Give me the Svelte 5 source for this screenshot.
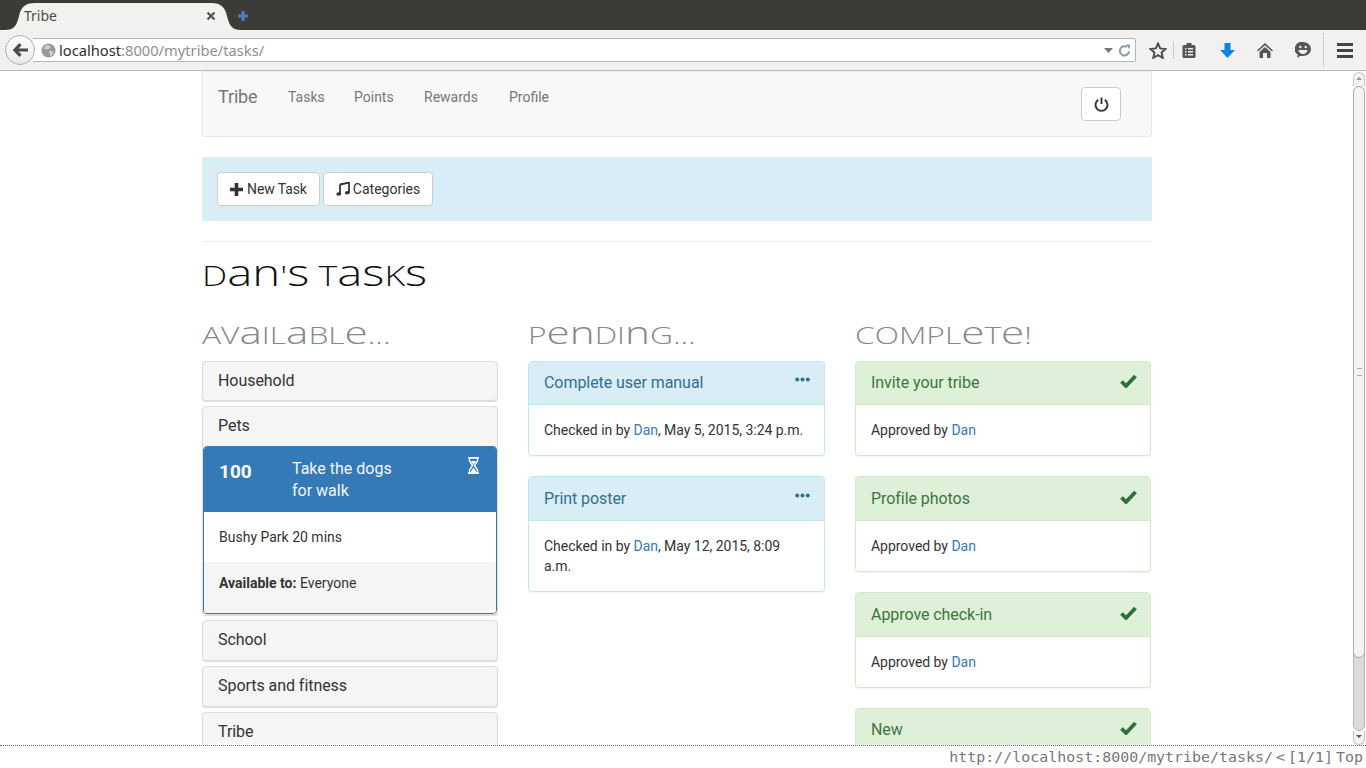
<script lang="ts">
const navLinks = ['Tasks', 'Points', 'Rewards', 'Profile'];
const pending = [
  { title: 'Complete user manual', when: 'May 5, 2015, 3:24 p.m.' },
  { title: 'Print poster', when: 'May 12, 2015, 8:09 a.m.' }
];
const complete = ['Invite your tribe', 'Profile photos', 'Approve check-in', 'New'];

// the heading face is unicase: a, e, n, s keep their small shape at capital height
function unicase(text: string) {
  return text.split(/([aens]+)/).filter(Boolean).map((run) => ({ run, small: /^[aens]+$/.test(run) }));
}
</script>

{#snippet heading(text: string)}
  <span class="wide">{#each unicase(text) as part}<span class={part.small ? 'lc' : 'uc'}>{part.run}</span>{/each}</span>
{/snippet}

<div class="browser">
  <div class="tabbar">
    <div class="tab">
      <svg class="tab-shape" width="240" height="28" viewBox="0 0 240 28">
        <path d="M0 28C10 28 12 22 14 14 16 5 20 1 30 1H206C216 1 220 5 222 14 224 22 226 28 236 28Z" fill="#f2f1f0" />
      </svg>
      <span class="tab-title">Tribe</span>
      <svg class="tab-close" width="10" height="10" viewBox="0 0 10 10"><path d="M1.500 1.500l7 7M8.500 1.500l-7 7" stroke="#55534f" stroke-width="2.200" /></svg>
    </div>
    <svg class="tab-new" width="12" height="12" viewBox="0 0 12 12"><path d="M6 1v10M1 6h10" stroke="#4a7fc4" stroke-width="3" /></svg>
  </div>

  <div class="toolbar">
    <div class="back">
      <svg width="15" height="14" viewBox="0 0 15 14"><path d="M7.500 1.200L2 7l5.500 5.800M2.500 7H15" fill="none" stroke="#4c4c4c" stroke-width="3.200" /></svg>
    </div>
    <div class="urlbar">
      <svg class="globe" width="15" height="15" viewBox="0 0 16 16">
        <circle cx="8" cy="8" r="7.500" fill="#9a9a9a" />
        <path d="M5 2l4 1 1 2-3 2-2-1-2 1zM9 8l4 1-1 4-2 1-1-3z" fill="#d2d2d2" />
      </svg>
      <span class="url"><span class="url-host">localhost</span>:8000/mytribe/tasks/</span>
      <svg class="url-drop" width="9" height="5" viewBox="0 0 9 5"><path d="M0 0h9L4.500 5z" fill="#777" /></svg>
      <svg class="url-reload" width="13" height="13" viewBox="0 0 13 13">
        <path d="M11 7.200A4.600 4.600 0 1 1 8.800 3" fill="none" stroke="#8b9bae" stroke-width="2" />
        <path d="M7.500 0.500L12 0.500 12 5.500z" fill="#8b9bae" />
      </svg>
    </div>
    <div class="tools">
      <svg class="tool-star" width="18" height="17" viewBox="0 0 18 17"><path d="M9 1.500l2.200 4.900 5.300.6-3.900 3.600 1.100 5.200L9 13.100l-4.700 2.700 1.100-5.200L1.500 7l5.300-.6z" fill="none" stroke="#4f4f4f" stroke-width="2" /></svg>
      <span class="tool-sep"></span>
      <svg class="tool-clip" width="14" height="16" viewBox="0 0 14 16"><path d="M2 3h2.500V1h5v2H12a1.500 1.500 0 0 1 1.500 1.500V14.500A1.500 1.500 0 0 1 12 16H2A1.500 1.500 0 0 1 .5 14.500V4.500A1.500 1.500 0 0 1 2 3z" fill="#555" /><path d="M3 6h1.500v1.500H3zM6 6h5v1.500H6zM3 9h1.500v1.500H3zM6 9h5v1.500H6zM3 12h1.500v1.500H3zM6 12h5v1.500H6z" fill="#f2f1f0" /></svg>
      <svg class="tool-down" width="15" height="15" viewBox="0 0 15 15"><path d="M4.500 0h6v7H15l-7.500 8L0 7h4.500z" fill="#0a84e8" /></svg>
      <svg class="tool-home" width="16" height="15" viewBox="0 0 16 15"><path d="M8 0L0 7.500 1 8.500 8 2.200 15 8.500 16 7.500zM2.500 9L8 4l5.500 5v6H10V10H6v5H2.500z" fill="#555" /></svg>
      <svg class="tool-smile" width="16" height="16" viewBox="0 0 16 16"><path d="M8 0a8 7 0 0 1 0 14H5L2 16l.8-3.300A7 7 0 0 1 8 0z" fill="#555" /><circle cx="5.300" cy="5" r="1.200" fill="#f2f1f0" /><circle cx="10.700" cy="5" r="1.200" fill="#f2f1f0" /><path d="M3.500 8h9a4.500 4 0 0 1-9 0z" fill="#f2f1f0" /></svg>
      <span class="tool-sep tall"></span>
      <div class="burger"><span></span><span></span><span></span></div>
    </div>
  </div>

  <div class="viewport">
    <div class="page">
      <div class="container">
        <nav class="navbar">
          <span class="brand">Tribe</span>
          <ul class="nav-links">
            {#each navLinks as link}
              <li>{link}</li>
            {/each}
          </ul>
          <button class="btn power" aria-label="Log out">
            <svg width="15" height="15" viewBox="0 0 15 15"><path d="M4.200 2.900a6 6 0 1 0 6.600 0" fill="none" stroke="#333" stroke-width="1.900" /><path d="M7.500 0.500v6.500" stroke="#333" stroke-width="1.900" /></svg>
          </button>
        </nav>

        <div class="actions">
          <button class="btn">
            <svg width="13" height="13" viewBox="0 0 13 13"><path d="M6.500 0v13M0 6.500h13" stroke="#333" stroke-width="3.600" /></svg>
            New Task
          </button>
          <button class="btn music">
            <svg width="14" height="14" viewBox="0 0 14 14"><path d="M4 2.500L13 .5V11" fill="none" stroke="#333" stroke-width="1.800" /><path d="M4 2.500V12.500" stroke="#333" stroke-width="1.800" /><ellipse cx="2.700" cy="12" rx="2.400" ry="1.800" fill="#333" /><ellipse cx="11.200" cy="10.800" rx="2.400" ry="1.800" fill="#333" /></svg>
            Categories
          </button>
        </div>

        <hr />

        <h1>{@render heading("Dan's Tasks")}</h1>

        <div class="columns">
          <section>
            <h2>{@render heading('Available...')}</h2>
            <div class="panel cat"><div class="cat-head">Household</div></div>
            <div class="panel cat open">
              <div class="cat-head">Pets</div>
              <div class="task">
                <div class="task-head">
                  <span class="task-points">100</span>
                  <span class="task-title">Take the dogs<br />for walk</span>
                  <svg class="hourglass" width="11" height="17" viewBox="0 0 11 17">
                    <path d="M0 .9h11M0 16.100h11" stroke="#fff" stroke-width="1.800" />
                    <path d="M1.500 1v3L4.500 8.500 1.500 13v3H9.500V13L6.500 8.500 9.500 4V1" fill="none" stroke="#fff" stroke-width="1.400" />
                    <path d="M3 4h5L5.500 8zM2.500 15L5.500 10.500 8.500 15z" fill="#fff" />
                  </svg>
                </div>
                <div class="task-body">Bushy Park 20 mins</div>
                <div class="task-foot"><strong>Available to:</strong> Everyone</div>
              </div>
            </div>
            <div class="panel cat"><div class="cat-head">School</div></div>
            <div class="panel cat"><div class="cat-head">Sports and fitness</div></div>
            <div class="panel cat"><div class="cat-head">Tribe</div></div>
          </section>

          <section>
            <h2>{@render heading('Pending...')}</h2>
            {#each pending as item}
              <div class="card info">
                <div class="card-head">
                  <span>{item.title}</span>
                  <svg class="dots" width="15" height="5" viewBox="0 0 15 5"><circle cx="2.200" cy="2.500" r="2" /><circle cx="7.500" cy="2.500" r="2" /><circle cx="12.800" cy="2.500" r="2" /></svg>
                </div>
                <div class="card-body">Checked in by <a href="#dan">Dan</a>, {item.when}</div>
              </div>
            {/each}
          </section>

          <section>
            <h2>{@render heading('Complete!')}</h2>
            {#each complete as title}
              <div class="card success">
                <div class="card-head">
                  <span>{title}</span>
                  <svg class="check" width="17" height="14" viewBox="0 0 17 14"><path d="M1.500 7.500L6 12 15.500 2" fill="none" stroke="#2f6f3a" stroke-width="3.800" /></svg>
                </div>
                <div class="card-body">Approved by <a href="#dan">Dan</a></div>
              </div>
            {/each}
          </section>
        </div>
      </div>
    </div>

    <div class="scrollbar">
      <div class="arrow up"></div>
      <div class="track">
        <div class="thumb"><span class="grip"></span></div>
      </div>
      <div class="arrow down"></div>
    </div>
  </div>

  <div class="status">
    <span>http://localhost:8000/mytribe/tasks/</span>
    <span class="status-pos">&lt;</span>
    <span>[1/1]</span>
    <span>Top</span>
  </div>
</div>

<style>
  :global(body) {
    margin: 0;
    font-family: Roboto, "Liberation Sans", sans-serif;
    font-size: 14px;
    color: #333;
  }

  .browser {
    height: 768px;
    display: flex;
    flex-direction: column;
    overflow: hidden;
    background: #fff;
  }

  .tabbar {
    height: 30px;
    box-sizing: border-box;
    padding: 2px 0 0 5px;
    background: #3c3b37;
    display: flex;
    align-items: center;
  }

  .tab {
    position: relative;
    width: 229px;
    height: 28px;
    display: flex;
    align-items: center;
    padding: 0 18px 0 19px;
    box-sizing: border-box;
  }

  .tab-shape {
    position: absolute;
    left: 0;
    top: 0;
  }

  .tab-title {
    position: relative;
    flex: 1;
    margin-top: -2px;
    font-family: "Noto Sans", Roboto, sans-serif;
    font-size: 14px;
    color: #4c4c4c;
  }

  .tab-close {
    position: relative;
  }

  .tab-new {
    margin-left: 3px;
  }

  .toolbar {
    height: 41px;
    box-sizing: border-box;
    background: #f2f1f0;
    border-bottom: 1px solid #b9b7b2;
    display: flex;
    align-items: center;
    padding-left: 5px;
  }

  .back {
    width: 30px;
    height: 30px;
    box-sizing: border-box;
    border: 1px solid #a9b0b8;
    border-radius: 50%;
    background: linear-gradient(#fff, #e9e8e6);
    display: flex;
    align-items: center;
    justify-content: center;
    position: relative;
    z-index: 1;
  }

  .urlbar {
    width: 1103px;
    height: 24px;
    margin-left: -2px;
    box-sizing: border-box;
    background: #fff;
    border: 1px solid #b5b5b0;
    border-left: none;
    border-radius: 0 2px 2px 0;
    display: flex;
    align-items: center;
    padding: 0 4px 0 8px;
  }

  .globe {
    flex: none;
  }

  .url {
    flex: 1;
    margin-left: 3px;
    font-family: "Noto Sans", Roboto, sans-serif;
    font-size: 14.700px;
    color: #8f8f8f;
  }

  .url-host {
    color: #2e2e2e;
  }

  .url-drop {
    margin-right: 5px;
  }

  .tools {
    flex: 1;
    display: flex;
    align-items: center;
    position: relative;
    height: 100%;
  }

  .tool-star {
    margin-left: 13px;
  }

  .tool-sep {
    width: 1px;
    height: 18px;
    margin-left: 6px;
    background: #cfcdc9;
  }

  .tool-sep.tall {
    height: 34px;
    margin-left: 12px;
  }

  .tool-clip {
    margin-left: 8px;
  }

  .tool-down {
    margin-left: 24px;
  }

  .tool-home {
    margin-left: 22px;
  }

  .tool-smile {
    margin-left: 22px;
  }

  .burger {
    margin-left: 13px;
    display: flex;
    flex-direction: column;
    gap: 3px;
  }

  .burger span {
    display: block;
    width: 16px;
    height: 3px;
    background: #444;
  }

  .viewport {
    flex: 1;
    min-height: 0;
    display: flex;
    overflow: hidden;
  }

  .page {
    flex: 1;
    min-width: 0;
    overflow: hidden;
  }

  .container {
    width: 950px;
    margin-left: 202px;
  }

  .navbar {
    height: 66px;
    box-sizing: border-box;
    border: 1px solid #e7e7e7;
    border-top-color: #eee;
    border-radius: 0 0 4px 4px;
    background: #f8f8f8;
    display: flex;
    align-items: flex-start;
    padding-left: 15px;
    margin-bottom: 20px;
    color: #777;
  }

  .brand {
    font-size: 18px;
    line-height: 20px;
    margin-top: 15px;
    width: 55px;
    letter-spacing: -0.150px;
  }

  .nav-links {
    list-style: none;
    margin: 0 0 0 15px;
    padding: 15px 0 0;
    display: grid;
    grid-template-columns: 36px 40px 55px auto;
    gap: 30px;
    line-height: 20px;
  }

  .btn {
    height: 34px;
    box-sizing: border-box;
    border: 1px solid #ccc;
    border-radius: 4px;
    background: #fff;
    color: #333;
    font-family: inherit;
    font-size: 14px;
    letter-spacing: -0.100px;
    padding: 0 12px;
    display: inline-flex;
    align-items: center;
    gap: 4px;
  }

  .music {
    gap: 3px;
    letter-spacing: 0;
  }

  .power {
    position: absolute;
    left: 1081px;
    top: 87px;
    width: 40px;
    justify-content: center;
    padding: 0;
  }

  .actions {
    height: 64px;
    box-sizing: border-box;
    background: #d9edf7;
    padding: 15px;
    display: flex;
    gap: 3px;
  }

  hr {
    border: none;
    border-top: 1px solid #eee;
    margin: 20px 0 0;
  }

  h1,
  h2 {
    margin: 0;
    font-family: "Open Sans", sans-serif;
    font-weight: 300;
    white-space: nowrap;
  }

  .wide {
    display: inline-block;
    transform-origin: left center;
  }

  .uc {
    text-transform: uppercase;
  }

  .lc {
    font-size: 1.330em;
    line-height: 1;
  }

  h1 {
    font-size: 27px;
    height: 36px;
    line-height: 32px;
    margin-top: 15px;
    color: #111;
  }

  h1 .wide {
    transform: translateY(-2px) scaleX(1.320);
  }

  h2 {
    font-size: 23px;
    height: 30px;
    line-height: 26px;
    margin-top: 26px;
    color: #888;
    margin-bottom: 11.600px;
  }

  h2 .wide {
    transform: translateY(-2px) scaleX(1.380);
  }

  .columns {
    display: grid;
    grid-template-columns: 296px 297px 296px;
    gap: 30px;
  }

  .panel {
    border: 1px solid #ddd;
    border-radius: 4px;
    background: #f5f5f5;
    box-shadow: 0 1px 1px rgba(0, 0, 0, 0.15);
    margin-bottom: 5px;
    overflow: hidden;
  }

  .cat-head {
    height: 38.800px;
    box-sizing: border-box;
    padding: 9px 15px;
    font-size: 16px;
    line-height: 20px;
    letter-spacing: -0.050px;
    color: #333;
  }

  .task {
    border: 1px solid #337ab7;
    border-radius: 4px;
    background: #fff;
    overflow: hidden;
  }

  .task-head {
    height: 65px;
    background: #337ab7;
    color: #fff;
    padding: 0 15px;
    display: flex;
    position: relative;
  }

  .task-points {
    width: 73px;
    font-size: 19px;
    font-weight: 700;
    line-height: 22px;
    margin-top: 14px;
  }

  .task-title {
    font-size: 16px;
    line-height: 22px;
    margin-top: 11px;
    color: #f3f6fa;
  }

  .hourglass {
    position: absolute;
    right: 17px;
    top: 10px;
  }

  .task-body {
    height: 50px;
    box-sizing: border-box;
    padding: 15px;
    line-height: 20px;
  }

  .task-foot {
    height: 51px;
    box-sizing: border-box;
    padding: 11px 15px;
    line-height: 20px;
    background: #f5f5f5;
  }

  .card {
    border: 1px solid;
    border-radius: 4px;
    background: #fff;
    margin-bottom: 20px;
    box-shadow: 0 1px 1px rgba(0, 0, 0, 0.05);
    overflow: hidden;
  }

  .card-head {
    height: 43.800px;
    box-sizing: border-box;
    border-bottom: 1px solid;
    padding: 11.500px 15px 0;
    font-size: 16px;
    line-height: 20px;
    letter-spacing: -0.060px;
    display: flex;
    justify-content: space-between;
    align-items: flex-start;
  }

  .card-body {
    padding: 15px;
    line-height: 20px;
    letter-spacing: -0.025px;
  }

  .card-body a {
    color: #337ab7;
    text-decoration: none;
  }

  .info {
    border-color: #bce8f1;
  }

  .info .card-head {
    background: #d9edf7;
    border-color: #bce8f1;
    color: #31708f;
  }

  .success {
    border-color: #d6e9c6;
  }

  .success .card-head {
    background: #dff0d8;
    border-color: #d6e9c6;
    color: #3c763d;
  }

  .dots {
    fill: #31708f;
    margin-top: 4px;
    margin-right: -0.500px;
  }

  .check {
    margin-top: 1px;
    margin-right: -2px;
  }

  .scrollbar {
    width: 14px;
    box-sizing: border-box;
    padding: 1px 1px 0 1px;
    background: #fff;
    display: flex;
    flex-direction: column;
  }

  .arrow {
    height: 14px;
    flex: none;
    position: relative;
    box-sizing: border-box;
    background: #f4f3f2;
    border: 1px solid #c4c3c0;
  }

  .arrow.up {
    border-bottom: none;
    border-radius: 6px 6px 0 0;
  }

  .arrow.down {
    border-top: none;
    border-radius: 0 0 6px 6px;
  }

  .arrow::after {
    content: "";
    position: absolute;
    left: 2px;
    border-left: 3.500px solid transparent;
    border-right: 3.500px solid transparent;
  }

  .arrow.up::after {
    top: 4px;
    border-bottom: 3px solid #9a9a9a;
  }

  .arrow.down::after {
    top: 4px;
    border-top: 3px solid #555;
  }

  .track {
    flex: 1;
    min-height: 0;
    box-sizing: border-box;
    background: #dcdbd8;
    border: 1px solid #b8b7b4;
    border-radius: 6px;
  }

  .thumb {
    height: 572px;
    margin: -1px;
    box-sizing: border-box;
    background: #f4f3f2;
    border: 1px solid #aeadaa;
    border-radius: 6px;
    display: flex;
    align-items: center;
    justify-content: center;
  }

  .grip {
    width: 5px;
    height: 6px;
    border-top: 1px solid #aaa;
    border-bottom: 1px solid #aaa;
  }

  .status {
    height: 23px;
    box-sizing: border-box;
    border-top: 1px dotted #666;
    display: flex;
    justify-content: flex-end;
    align-items: center;
    gap: 3px;
    padding-right: 3px;
    font-family: "DejaVu Sans Mono", monospace;
    font-size: 14.950px;
    color: #777;
    background: #fff;
  }
</style>
